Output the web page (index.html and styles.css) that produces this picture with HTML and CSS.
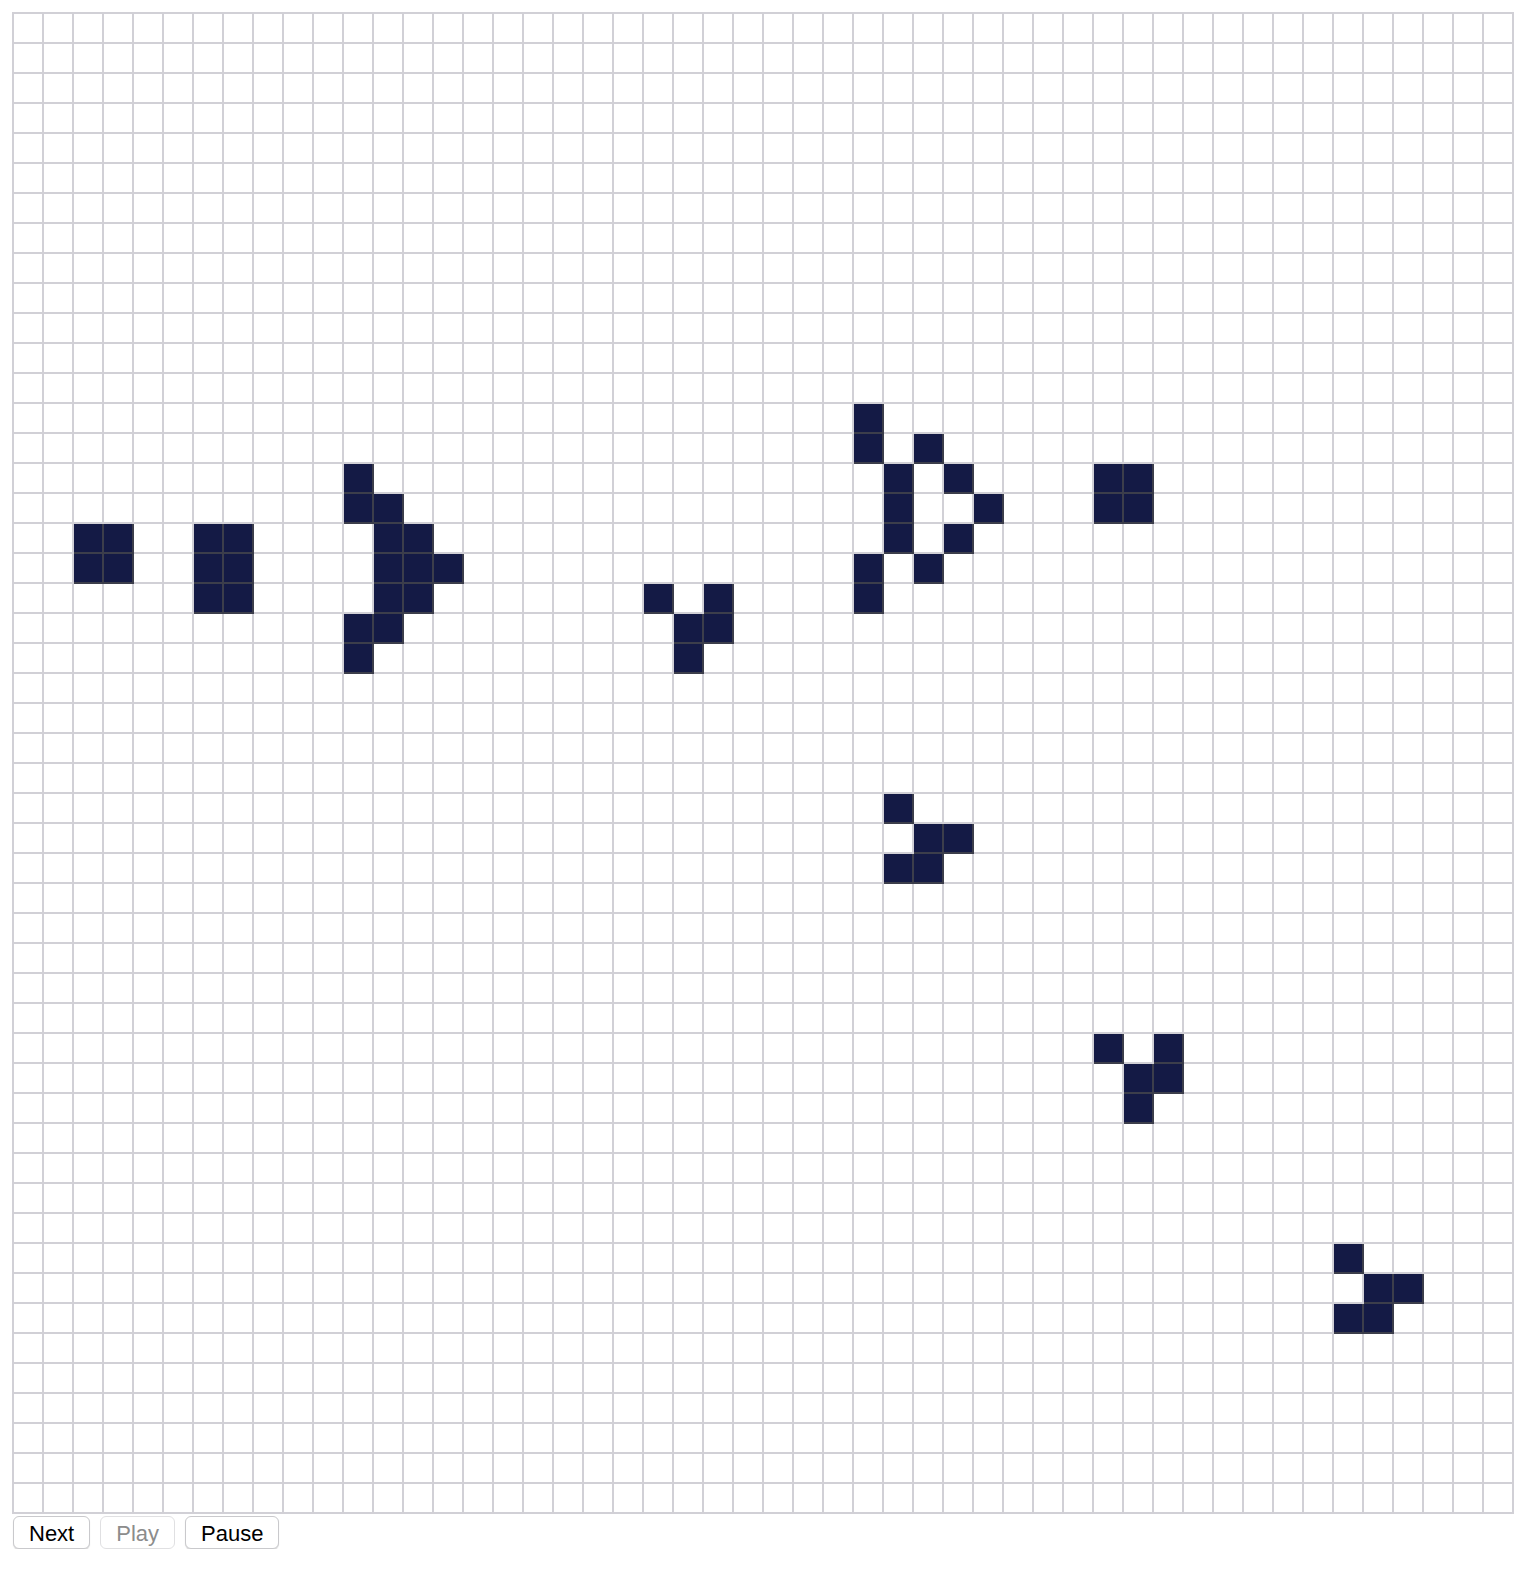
FILE: index.html
```html
<!DOCTYPE html>
<html lang="en">
<head>
<meta charset="UTF-8">
<title>Game of Life</title>
<link rel="stylesheet" href="styles.css">
</head>
<body>
<div id="board" class="board"></div>
<div class="controls">
    <button class="btn">Next</button>
    <button class="btn" disabled>Play</button>
    <button class="btn">Pause</button>
</div>
<script>
    var size = 50;
    // live cells as [row, col]
    var alive = [
        [17, 2], [17, 3], [18, 2], [18, 3],
        [17, 6], [17, 7], [18, 6], [18, 7], [19, 6], [19, 7],
        [15, 11], [16, 11], [16, 12], [17, 12], [17, 13], [18, 12], [18, 13], [18, 14],
        [19, 12], [19, 13], [20, 11], [20, 12], [21, 11],
        [19, 21], [19, 23], [20, 22], [20, 23], [21, 22],
        [13, 28], [14, 28], [14, 30], [15, 29], [15, 31], [16, 29], [16, 32],
        [17, 29], [17, 31], [18, 28], [18, 30], [19, 28],
        [15, 36], [15, 37], [16, 36], [16, 37],
        [26, 29], [27, 30], [27, 31], [28, 29], [28, 30],
        [34, 36], [34, 38], [35, 37], [35, 38], [36, 37],
        [41, 44], [42, 45], [42, 46], [43, 44], [43, 45]
    ];

    var live = {};
    alive.forEach(function (c) { live[c[0] + '-' + c[1]] = true; });

    var board = document.getElementById('board');
    for (var r = 0; r < size; r++) {
        for (var c = 0; c < size; c++) {
            var cell = document.createElement('div');
            cell.className = live[r + '-' + c] ? 'cell alive' : 'cell';
            board.appendChild(cell);
        }
    }
</script>
</body>
</html>
```

FILE: styles.css
```css
body {
    margin: 12px;
    font-family: "Liberation Sans", Arial, sans-serif;
    background-color: #ffffff;
}
.board {
    display: grid;
    grid-template-columns: repeat(50, 30px);
    grid-auto-rows: 30px;
    width: max-content;
    border-top: 2px solid #d1d0d6;
    border-left: 2px solid #d1d0d6;
}
.cell {
    box-sizing: border-box;
    border-right: 2px solid #d1d0d6;
    border-bottom: 2px solid #d1d0d6;
    background-color: #ffffff;
}
.cell.alive {
    background-color: #141a45;
    border-color: #3c3e4b;
}
.controls {
    display: flex;
    gap: 10px;
    margin-top: 2px;
    padding-left: 1px;
}
.btn {
    height: 33px;
    padding: 3px 15px 0;
    font-family: "Liberation Sans", Arial, sans-serif;
    font-size: 22px;
    color: #000000;
    background-color: #ffffff;
    border: 1px solid #c9c9cc;
    border-radius: 6px;
    box-shadow: 0 1px 1px rgba(0, 0, 0, 0.15);
    cursor: pointer;
}
.btn:disabled {
    color: #8c8c8c;
    border-color: #e0e0e2;
    box-shadow: none;
    cursor: default;
}
```
